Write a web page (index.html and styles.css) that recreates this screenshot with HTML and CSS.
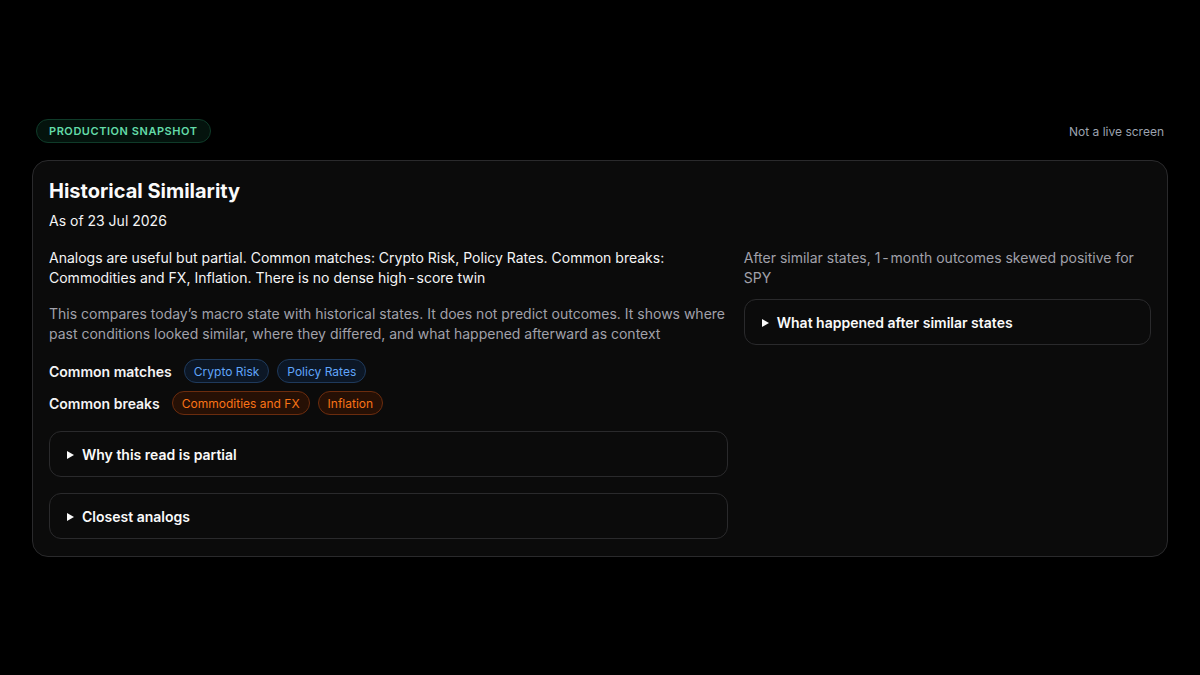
FILE: index.html
```html
<!DOCTYPE html>
<html lang="en">
<head>
<meta charset="utf-8">
<title>Historical Similarity</title>
<link rel="stylesheet" href="styles.css">
</head>
<body>
<main class="page">
  <div class="topbar">
    <span class="badge">PRODUCTION SNAPSHOT</span>
    <span class="note">Not a live screen</span>
  </div>
  <section class="card">
    <h1 class="title">Historical Similarity</h1>
    <p class="asof">As of 23 Jul 2026</p>
    <div class="grid">
      <div class="col">
        <p class="lead">Analogs are useful but partial. Common matches: Crypto Risk, Policy Rates. Common breaks: Commodities and FX, Inflation. There is no dense high&#8239;&#8209;&#8239;score twin</p>
        <p class="muted">This compares today’s macro state with historical states. It does not predict outcomes. It shows where past conditions looked similar, where they differed, and what happened afterward as context</p>
        <div class="tags">
          <div class="tagrow">
            <span class="label">Common matches</span>
            <span class="chip blue">Crypto Risk</span>
            <span class="chip blue">Policy Rates</span>
          </div>
          <div class="tagrow">
            <span class="label">Common breaks</span>
            <span class="chip orange">Commodities and FX</span>
            <span class="chip orange">Inflation</span>
          </div>
        </div>
        <details class="disc"><summary>Why this read is partial</summary></details>
        <details class="disc"><summary>Closest analogs</summary></details>
      </div>
      <div class="col col-right">
        <p class="muted">After similar states, 1&#8239;&#8209;&#8239;month outcomes skewed positive for SPY</p>
        <details class="disc"><summary>What happened after similar states</summary></details>
      </div>
    </div>
  </section>
</main>
</body>
</html>
```

FILE: styles.css
```css
* { box-sizing: border-box; }
html, body {
  margin: 0;
  background: #000;
  color: #f4f4f5;
  font-family: Inter, "Noto Sans", sans-serif;
}
.page {
  width: 1136px;
  margin: 0 auto;
  padding-top: 119px;
}
.topbar {
  display: flex;
  justify-content: space-between;
  align-items: center;
  padding: 0 4px;
  height: 24px;
  margin-bottom: 17px;
}
.badge {
  display: inline-flex;
  align-items: center;
  height: 24px;
  padding: 0 12px;
  border-radius: 999px;
  background: #04130d;
  border: 1px solid #0f3b29;
  color: #63dba8;
  font-size: 11px;
  font-weight: 600;
  letter-spacing: 0.55px;
}
.note {
  font-size: 12px;
  color: #9ca3af;
}
.card {
  background: #0b0b0b;
  border: 1px solid #2a2a2c;
  border-radius: 16px;
  padding: 16px 16px 17px;
}
.title {
  margin: 0;
  font-size: 20px;
  line-height: 28px;
  font-weight: 700;
  color: #fafafa;
}
.asof {
  margin: 6px 0 17px;
  font-size: 14px;
  line-height: 20px;
  color: #f4f4f5;
}
.grid {
  display: grid;
  grid-template-columns: 5fr 3fr;
  gap: 16px;
  align-items: start;
}
.col {
  display: flex;
  flex-direction: column;
  gap: 16px;
}
.col-right { gap: 11px; }
.col p { margin: 0; font-size: 14px; line-height: 20px; }
.lead { color: #f4f4f5; }
.muted { color: #a1a1aa; }
.tags {
  display: flex;
  flex-direction: column;
  gap: 8px;
  margin-top: -1px;
}
.tagrow {
  display: flex;
  align-items: center;
  gap: 8px;
  height: 24px;
}
.label {
  font-size: 14px;
  font-weight: 600;
  color: #f4f4f5;
  margin-right: 4px;
}
.chip {
  display: inline-flex;
  align-items: center;
  height: 24px;
  padding: 0 9px;
  border-radius: 999px;
  font-size: 12px;
  border: 1px solid;
}
.chip.blue {
  background: #0c1726;
  border-color: #1f3a5c;
  color: #60a5fa;
}
.chip.orange {
  background: #261005;
  border-color: #6b2c0e;
  color: #f97316;
}
.disc {
  border: 1px solid #2a2a2c;
  border-radius: 12px;
  background: #0b0b0b;
}
.disc summary {
  list-style: none;
  display: flex;
  align-items: center;
  padding: 12px 16px 11px 17px;
  min-height: 44px;
  font-size: 14px;
  line-height: 20px;
  font-weight: 600;
  color: #fafafa;
  cursor: pointer;
}
.disc summary::-webkit-details-marker { display: none; }
.disc summary::before {
  content: "";
  width: 0;
  height: 0;
  border-left: 7px solid #fafafa;
  border-top: 4px solid transparent;
  border-bottom: 4px solid transparent;
  margin-right: 8px;
}
```
